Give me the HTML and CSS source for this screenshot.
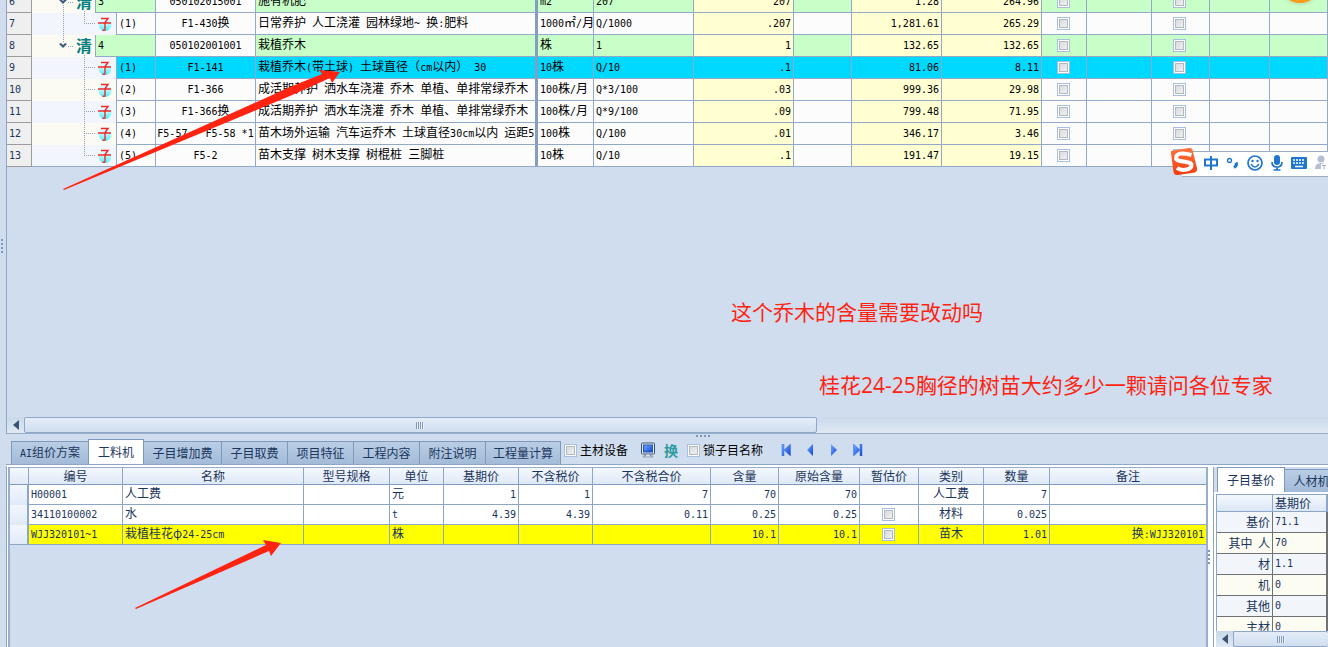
FILE: index.html
```html
<!DOCTYPE html>
<html lang="zh-CN">
<head>
<meta charset="utf-8">
<title>工程计价</title>
<link rel="stylesheet" href="styles.css">
</head>
<body>
<svg class="defs" aria-hidden="true">
  <defs>
    <linearGradient id="ball" x1="0" y1="0" x2="0" y2="1"><stop offset="0" stop-color="#f0fcff"/><stop offset="0.500" stop-color="#b4f7fc"/><stop offset="1" stop-color="#3ff0f8"/></linearGradient>
    <linearGradient id="blue" x1="0" y1="0" x2="1" y2="1"><stop offset="0" stop-color="#79aaff"/><stop offset="1" stop-color="#0a45d8"/></linearGradient>
    <linearGradient id="sogou" x1="0" y1="0" x2="0" y2="1"><stop offset="0" stop-color="#ff7440"/><stop offset="1" stop-color="#f03c0e"/></linearGradient>
    <symbol id="parent" viewBox="0 0 64 22">
      <path d="M27 9l4 4 4-4-2-1-2 2-2-2z" fill="#43587d"/>
      <path d="M36 11.500h6" stroke="#8aa0bd" stroke-dasharray="1 1"/>
      <text x="44" y="17" class="qing">清</text>
    </symbol>
    <symbol id="child" viewBox="0 0 85 22">
      <path d="M54 10.500h10" stroke="#8aa0bd" stroke-dasharray="1 1"/>
      <circle cx="73" cy="11.500" r="6.500" fill="url(#ball)"/>
      <path d="M69 5.500h7l-3 4v7q0 1.500-2.500 .5M66 10h13" fill="none" stroke="#f0282d" stroke-width="1.400"/>
    </symbol>
  </defs>
</svg>

<main class="top">
  <div class="grid-pane">
    <div class="grid-view">
    <table class="grid">
      <colgroup><col class="w25"><col class="w64"><col class="w21"><col class="w39"><col class="w100"><col class="w282"><col class="w56"><col class="w100"><col class="w100"><col class="w58"><col class="w90"><col class="w100"><col class="w45"><col class="w65"><col class="w58"><col class="w60"><col></colgroup>
      <tbody>
      <tr class="item"><th>6</th><td class="tree"><svg width="64" height="22"><use href="#parent"/><path d="M31.500 14v8M52.500 20v2" class="dots"/></svg></td><td colspan="2">3</td><td class="code">050102015001</td><td class="name"><span class="z">施有机肥</span></td><td>m2</td><td>207</td><td class="num">207</td><td></td><td class="num">1.28</td><td class="num">264.96</td><td class="ck"><input type="checkbox" aria-label="6 甲"></td><td></td><td class="ck"><input type="checkbox" aria-label="6 乙"></td><td></td><td></td></tr>
      <tr><th>7</th><td class="tree alt" colspan="2"><svg width="85" height="22"><use href="#child"/><path d="M31.500 0v22M52.500 0v11" class="dots"/></svg></td><td>(1)</td><td class="code">F1-430<span class="z">换</span></td><td class="name"><span class="z">日常养护</span> <span class="z">人工浇灌</span> <span class="z">园林绿地</span>~ <span class="z">换</span>:<span class="z">肥料</span></td><td>1000<span class="z">㎡</span>/<span class="z">月</span></td><td>Q/1000</td><td class="num">.207</td><td></td><td class="num">1,281.61</td><td class="num">265.29</td><td class="ck"><input type="checkbox" aria-label="7 甲"></td><td></td><td class="ck"><input type="checkbox" aria-label="7 乙"></td><td></td><td></td></tr>
      <tr class="item"><th>8</th><td class="tree"><svg width="64" height="22"><use href="#parent"/><path d="M31.500 0v8M52.500 20v2" class="dots"/></svg></td><td colspan="2">4</td><td class="code">050102001001</td><td class="name"><span class="z">栽植乔木</span></td><td><span class="z">株</span></td><td>1</td><td class="num">1</td><td></td><td class="num">132.65</td><td class="num">132.65</td><td class="ck"><input type="checkbox" aria-label="8 甲"></td><td></td><td class="ck"><input type="checkbox" aria-label="8 乙"></td><td></td><td></td></tr>
      <tr class="selected"><th>9</th><td class="tree alt" colspan="2"><svg width="85" height="22"><use href="#child"/><path d="M52.500 0v22" class="dots"/></svg></td><td>(1)</td><td class="code">F1-141</td><td class="name"><span class="z">栽植乔木</span>(<span class="z">带土球</span>) <span class="z">土球直径（</span>cm<span class="z">以内）</span> 30</td><td>10<span class="z">株</span></td><td>Q/10</td><td class="num">.1</td><td></td><td class="num">81.06</td><td class="num">8.11</td><td class="ck"><input type="checkbox" aria-label="9 甲"></td><td></td><td class="ck"><input type="checkbox" aria-label="9 乙"></td><td></td><td></td></tr>
      <tr><th>10</th><td class="tree" colspan="2"><svg width="85" height="22"><use href="#child"/><path d="M52.500 0v22" class="dots"/></svg></td><td>(2)</td><td class="code">F1-366</td><td class="name"><span class="z">成活期养护</span> <span class="z">洒水车浇灌</span> <span class="z">乔木</span> <span class="z">单植、单排常绿乔木</span></td><td>100<span class="z">株</span>/<span class="z">月</span></td><td>Q*3/100</td><td class="num">.03</td><td></td><td class="num">999.36</td><td class="num">29.98</td><td class="ck"><input type="checkbox" aria-label="10 甲"></td><td></td><td class="ck"><input type="checkbox" aria-label="10 乙"></td><td></td><td></td></tr>
      <tr><th>11</th><td class="tree alt" colspan="2"><svg width="85" height="22"><use href="#child"/><path d="M52.500 0v22" class="dots"/></svg></td><td>(3)</td><td class="code">F1-366<span class="z">换</span></td><td class="name"><span class="z">成活期养护</span> <span class="z">洒水车浇灌</span> <span class="z">乔木</span> <span class="z">单植、单排常绿乔木</span></td><td>100<span class="z">株</span>/<span class="z">月</span></td><td>Q*9/100</td><td class="num">.09</td><td></td><td class="num">799.48</td><td class="num">71.95</td><td class="ck"><input type="checkbox" aria-label="11 甲"></td><td></td><td class="ck"><input type="checkbox" aria-label="11 乙"></td><td></td><td></td></tr>
      <tr><th>12</th><td class="tree" colspan="2"><svg width="85" height="22"><use href="#child"/><path d="M52.500 0v22" class="dots"/></svg></td><td>(4)</td><td class="code pre">F5-57   F5-58 *1</td><td class="name"><span class="z">苗木场外运输</span> <span class="z">汽车运乔木</span> <span class="z">土球直径</span>30cm<span class="z">以内</span> <span class="z">运距</span>5</td><td>100<span class="z">株</span></td><td>Q/100</td><td class="num">.01</td><td></td><td class="num">346.17</td><td class="num">3.46</td><td class="ck"><input type="checkbox" aria-label="12 甲"></td><td></td><td class="ck"><input type="checkbox" aria-label="12 乙"></td><td></td><td></td></tr>
      <tr><th>13</th><td class="tree alt last" colspan="2"><svg width="85" height="21"><use href="#child" height="22"/><path d="M52.500 0v11" class="dots"/></svg></td><td>(5)</td><td class="code">F5-2</td><td class="name"><span class="z">苗木支撑</span> <span class="z">树木支撑</span> <span class="z">树棍桩</span> <span class="z">三脚桩</span></td><td>10<span class="z">株</span></td><td>Q/10</td><td class="num">.1</td><td></td><td class="num">191.47</td><td class="num">19.15</td><td class="ck"><input type="checkbox" aria-label="13 甲"></td><td></td><td class="ck"><input type="checkbox" aria-label="13 乙"></td><td></td><td></td></tr>
      </tbody>
    </table>
    </div>
    <div class="hscroll">
      <button type="button" class="arrow" aria-label="向左滚动"><svg width="6" height="10"><path d="M6 0v10L0 5z" fill="#3d5272"/></svg></button>
      <div class="thumb"><span class="grip"></span></div>
    </div>
  </div>
</main>

<section class="bottom">
  <span class="split-h"></span>
  <div class="bar">
    <div class="tabs" role="tablist">
      <button type="button" role="tab" class="tab w78"><span class="m">AI</span>组价方案</button>
      <button type="button" role="tab" class="tab on w56" aria-selected="true">工料机</button>
      <button type="button" role="tab" class="tab w78">子目增加费</button>
      <button type="button" role="tab" class="tab w66">子目取费</button>
      <button type="button" role="tab" class="tab w66">项目特征</button>
      <button type="button" role="tab" class="tab w66">工程内容</button>
      <button type="button" role="tab" class="tab w66">附注说明</button>
      <button type="button" role="tab" class="tab w75">工程量计算</button>
    </div>
    <div class="tools">
      <label><input type="checkbox">主材设备</label>
      <button type="button" class="ib" aria-label="显示"><svg width="16" height="16"><rect x="1.500" y="1" width="13" height="11" rx="1" fill="#e9eef7" stroke="#3a5078"/><rect x="3.500" y="3" width="9" height="7" fill="url(#blue)" stroke="#1d55b0"/><path d="M6 12h4v1.500q3 0 3 1.500H3q0-1.500 3-1.500z" fill="#dce2ea" stroke="#75839a" stroke-width=".7"/></svg></button>
      <button type="button" class="ib swap">换</button>
      <label><input type="checkbox">锁子目名称</label>
      <div class="nav">
        <button type="button" class="ib" aria-label="第一条"><svg width="10" height="12"><path d="M1 0h2v12H1zM9.500 0v12L3 6z" fill="url(#blue)" stroke="#3b6de0" stroke-width=".5"/></svg></button>
        <button type="button" class="ib" aria-label="上一条"><svg width="10" height="12"><path d="M8 0v12L2 6z" fill="url(#blue)"/></svg></button>
        <button type="button" class="ib" aria-label="下一条"><svg width="10" height="12"><path d="M2 0v12l6-6z" fill="url(#blue)"/></svg></button>
        <button type="button" class="ib" aria-label="最后一条"><svg width="10" height="12"><path d="M7 0h2v12H7zM.5 0v12L7 6z" fill="url(#blue)" stroke="#3b6de0" stroke-width=".5"/></svg></button>
      </div>
    </div>
  </div>
  <div class="panels">
    <div class="detail-pane">
      <table class="detail">
        <colgroup><col class="w19"><col class="w94"><col class="w181"><col class="w86"><col class="w54"><col class="w75"><col class="w74"><col class="w118"><col class="w68"><col class="w81"><col class="w59"><col class="w65"><col class="w66"><col></colgroup>
        <thead><tr><th></th><th>编号</th><th>名称</th><th>型号规格</th><th>单位</th><th>基期价</th><th>不含税价</th><th>不含税合价</th><th>含量</th><th>原始含量</th><th>暂估价</th><th>类别</th><th>数量</th><th>备注</th></tr></thead>
        <tbody>
        <tr><th></th><td>H00001</td><td><span class="z">人工费</span></td><td></td><td><span class="z">元</span></td><td class="r">1</td><td class="r">1</td><td class="r">7</td><td class="r">70</td><td class="r">70</td><td></td><td class="c"><span class="z">人工费</span></td><td class="r">7</td><td></td></tr>
        <tr><th></th><td>34110100002</td><td><span class="z">水</span></td><td></td><td>t</td><td class="r">4.39</td><td class="r">4.39</td><td class="r">0.11</td><td class="r">0.25</td><td class="r">0.25</td><td class="ck"><input type="checkbox" aria-label="暂估价 水"></td><td class="c"><span class="z">材料</span></td><td class="r">0.025</td><td></td></tr>
        <tr class="hot"><th></th><td>WJJ320101~1</td><td><span class="z">栽植桂花φ</span>24-25cm</td><td></td><td><span class="z">株</span></td><td></td><td></td><td></td><td class="r">10.1</td><td class="r">10.1</td><td class="ck"><input type="checkbox" aria-label="暂估价 桂花"></td><td class="c"><span class="z">苗木</span></td><td class="r">1.01</td><td class="r"><span class="z">换</span>:WJJ320101</td></tr>
        </tbody>
      </table>
    </div>
    <div class="split-v"><span></span></div>
    <aside class="side">
      <div class="side-tabs" role="tablist">
        <button type="button" role="tab" class="tab on w68" aria-selected="true">子目基价</button>
        <button type="button" role="tab" class="tab w66">人材机费</button>
      </div>
      <div class="side-body">
        <div class="side-view">
        <table class="price">
          <colgroup><col class="w56"><col class="w54"><col></colgroup>
          <thead><tr><th></th><th>基期价</th><th></th></tr></thead>
          <tbody>
          <tr><th>基价</th><td>71.1</td><td></td></tr>
          <tr><th>其中 &nbsp;人</th><td>70</td><td></td></tr>
          <tr><th>材</th><td>1.1</td><td></td></tr>
          <tr><th>机</th><td>0</td><td></td></tr>
          <tr><th>其他</th><td>0</td><td></td></tr>
          <tr><th>主材</th><td>0</td><td></td></tr>
          </tbody>
        </table>
        </div>
        <div class="hscroll">
          <button type="button" class="arrow" aria-label="向左滚动"><svg width="6" height="10"><path d="M6 0v10L0 5z" fill="#3d5272"/></svg></button>
          <div class="thumb wide"><span class="grip"></span></div>
        </div>
      </div>
    </aside>
  </div>
</section>

<span class="dots-left"></span>
<svg class="marks" aria-hidden="true"><g fill="#ff2412"><path d="M63 189L290 87l32-13-3-4 21 2-8 11-2-5-40 18L64 190z"/><path d="M135 608L266 545l-3-5 18 3-10 13-2-5L136 609z"/></g></svg>
<p class="note first">这个乔木的含量需要改动吗</p>
<p class="note second">桂花24-25胸径的树苗大约多少一颗请问各位专家</p>
<span class="orb"></span>

<div class="ime">
  <svg width="158" height="28" aria-hidden="true">
    <path d="M1 5Q0 3 3 2.500L19 0q3-.5 3.500 2L27 20q.5 4-2 4.500L8 27q-4 .5-4.500-3z" fill="url(#sogou)"/>
    <path d="M21.500 7Q7 3 6 9.500C5 15 22 12 21.500 17.500C21 22.500 11 23 7 20" fill="none" stroke="#fff" stroke-width="4"/>
    <g fill="none" stroke="#1f76cf" stroke-width="2">
      <path d="M35 11.500h12v6H35zM41 8v14"/>
      <circle cx="59.500" cy="12.500" r="2" stroke-width="1.300"/>
      <path d="M66 14.500q1.500 3-2 5" stroke-width="3"/>
      <circle cx="85" cy="15" r="7" stroke-width="1.700"/>
      <path d="M81 16q4 6 8 0" stroke-width="1.400"/>
      <path d="M102 14q0 5 5 5t5-5M107 19v3M103.500 22h7" stroke-width="1.700"/>
    </g>
    <rect x="104" y="7" width="6" height="10" rx="3" fill="#1f76cf"/>
    <circle cx="82.500" cy="13" r="1.200" fill="#1f76cf"/><circle cx="87.500" cy="13" r="1.200" fill="#1f76cf"/>
    <rect x="121" y="9" width="16" height="12" rx="1" fill="#1f76cf"/>
    <path d="M123 12h12M123 15h12" stroke="#fff" stroke-width="1.500" stroke-dasharray="2 1"/><path d="M125 18.500h8" stroke="#fff" stroke-width="1.500"/>
    <circle cx="151" cy="11" r="3.500" fill="#b4bfd2"/><path d="M145 21q0-6 6-6t7 6z" fill="#b4bfd2"/><path d="M151 16h7v6h-7z" fill="#fff"/><path d="M152 17.500h4M154 17.500v4" stroke="#a3b0c8"/>
  </svg>
</div>
</body>
</html>
```

FILE: styles.css
```css
* { box-sizing: border-box; }
html, body { height: 100%; }
body {
  margin: 0;
  display: flex;
  flex-direction: column;
  position: relative;
  overflow: hidden;
  background: #d0ddee;
  color: #1b355c;
  font: 12px/16px "Noto Sans CJK SC", sans-serif;
}
button { font: inherit; color: inherit; border: 0; padding: 0; background: none; }
table { border-collapse: separate; border-spacing: 0; table-layout: fixed; width: 100%; }
th { font-weight: 400; }
td, th { padding: 0 2px; white-space: nowrap; overflow: hidden; }
td, .m { font-family: "DejaVu Sans Mono", "Noto Sans CJK SC", monospace; font-size: 10px; }
.z { font: 12px/12px "Noto Sans CJK SC", sans-serif; }
.defs { position: absolute; width: 0; height: 0; }
.qing { font: 700 16px "Noto Sans CJK SC", sans-serif; fill: #047f7f; }
.dots { fill: none; stroke: #8aa0bd; stroke-dasharray: 1 1; }

.w19 { width: 19px; } .w21 { width: 21px; } .w25 { width: 25px; } .w39 { width: 39px; }
.w45 { width: 45px; } .w54 { width: 54px; } .w56 { width: 56px; } .w58 { width: 58px; }
.w59 { width: 59px; } .w60 { width: 60px; } .w64 { width: 64px; } .w65 { width: 65px; }
.w66 { width: 66px; } .w68 { width: 68px; } .w74 { width: 74px; } .w75 { width: 75px; }
.w78 { width: 78px; } .w81 { width: 81px; } .w86 { width: 86px; } .w90 { width: 90px; }
.w94 { width: 94px; } .w100 { width: 100px; } .w118 { width: 118px; } .w181 { width: 181px; }
.w282 { width: 282px; }

input[type="checkbox"] {
  appearance: none;
  flex: none;
  width: 13px;
  height: 13px;
  margin: 0;
  border: 1px solid #a8bfe0;
  background: linear-gradient(135deg, #d6d9de, #f1f2f3) content-box, #fff;
  padding: 1px;
  outline: 1px solid #b4b8bf;
  outline-offset: -3px;
}
.ck { text-align: center; padding: 0 2px 0 0; }
.ck input { display: block; margin: 0 auto; }

/* upper grid */
.top { flex: 1; min-height: 0; display: flex; padding-left: 6px; }
.grid-pane { flex: 1; min-width: 0; display: flex; flex-direction: column; border-left: 1px solid #8ea6c6; border-bottom: 1px solid #9aaec9; }
.grid-view { flex: 1; min-height: 0; overflow: hidden; }
.grid { margin-top: -9px; color: #000; }
.grid td, .grid th { height: 22px; line-height: 21px; border-right: 1px solid #93a9c8; border-bottom: 1px solid #93a9c8; }
.grid td { background: #fcfcfd; }
.grid th { background: #efefef; border-color: #9c9c9c; text-align: left; color: #1b355c; font: 10px/21px "DejaVu Sans Mono", monospace; }
.grid .item td { background: #c8ffc8; }
.grid .item .code { background: #fcfcfd; }
.grid .num, .grid .item .num { background: #ffffd2; text-align: right; }
.grid .selected td { background: #00d9ff; }
.grid .code { text-align: center; padding: 0; }
.grid .pre { white-space: pre; }
.grid .name { border-right: 3px solid #859dbf; }
.grid .tree, .grid .item .tree, .grid .selected .tree { padding: 0; border-bottom: 0; background: #fbfbf4; line-height: 0; }
.grid .tree svg { display: block; }
.grid .tree.alt, .grid .selected .tree.alt { background: #f2f6fc; }
.grid .tree.last { border-bottom: 1px solid #93a9c8; }

.hscroll { flex: none; display: flex; height: 16px; background: linear-gradient(#c9d8ea, #e0e9f3); }
.arrow { width: 17px; display: flex; align-items: center; justify-content: center; }
.thumb { width: 60%; display: flex; align-items: center; justify-content: center; border: 1px solid #8fa8ca; border-radius: 2px; background: linear-gradient(#e4edf7, #d0deef); }
.thumb.wide { width: auto; flex: 1; border-right: 0; }
.grip { width: 8px; height: 7px; background: repeating-linear-gradient(90deg, #7f98bd 0 1px, #eaf1f9 1px 2px); }

/* lower section */
.bottom { flex: none; height: 213px; display: flex; flex-direction: column; position: relative; padding-left: 6px; }
.split-h { position: absolute; left: 696px; top: 1px; width: 14px; height: 2px; background: repeating-linear-gradient(90deg, #7f98bd 0 2px, transparent 2px 4px); }
.bar { flex: none; display: flex; height: 31px; border-bottom: 1px solid #8ea6c6; }
.tabs { display: flex; align-items: flex-end; padding-left: 5px; }
.tab { height: 23px; border: solid #7f99bd; border-width: 1px 1px 0 0; background: linear-gradient(#b9cde5, #a3bbd8); white-space: nowrap; text-align: center; }
.tab:first-child { border-left-width: 1px; }
.tab.on { height: 25px; background: #fff; border-left-width: 1px; margin-left: -1px; }
.tools { display: flex; align-items: center; padding: 2px 0 0 3px; color: #000; }
.tools label { display: flex; align-items: center; gap: 3px; }
.ib { display: flex; align-items: center; justify-content: center; margin-left: 12px; }
.swap { margin: 0 9px 0 8px; width: 14px; font-size: 14px; font-weight: 700; color: #2a9a9f; }
.nav { display: flex; padding-left: 4px; }
.nav .ib { margin: 0 0 0 14px; }
.panels { flex: 1; min-height: 0; display: flex; border-top: 2px solid #fff; border-left: 1px solid #8ea6c6; }
.detail-pane { flex: 1; min-width: 0; border: solid #9aaecb; border-width: 1px 2px 0 2px; margin-left: 1px; box-shadow: -1px 0 #fff; }
.detail thead th { height: 17px; line-height: 16px; background: linear-gradient(#f4f8fd, #dfe9f7); border-right: 1px solid #8ea6c6; border-bottom: 1px solid #7f9bc1; }
.detail tbody th { background: linear-gradient(#f2f7fd, #dfeaf8); border-right: 2px solid #8ea6c6; }
.detail td { height: 20px; line-height: 19px; background: #fff; border-right: 1px solid #8ea6c6; border-bottom: 1px solid #8ea6c6; }
.detail tbody tr:last-child th { border-bottom: 1px solid #8ea6c6; }
.detail .hot td { background: #ff0; }
.detail .r { text-align: right; }
.detail .c { text-align: center; }
.detail tr > :last-child { border-right: 0; }
.split-v { width: 5px; background: #fff; display: flex; align-items: center; }
.split-v span { width: 2px; height: 14px; background: repeating-linear-gradient(#7f98bd 0 2px, transparent 2px 4px); }
.side { flex: none; width: 115px; display: flex; flex-direction: column; overflow: hidden; border-left: 1px solid #8ea6c6; }
.side-tabs { flex: none; display: flex; align-items: flex-end; padding-left: 4px; height: 25px; }
.side-tabs .tab { flex: none; }
.side-body { flex: 1; min-height: 0; display: flex; flex-direction: column; border-top: 2px solid #fff; border-left: 2px solid #fff; }
.side-view { flex: 1; min-height: 0; overflow: hidden; border: solid #8ea6c6; border-width: 1px 0 0 1px; }
.price td, .price th { height: 21px; line-height: 20px; border-right: 1px solid #6e7175; border-bottom: 1px solid #6e7175; }
.price thead th { height: 17px; line-height: 16px; background: linear-gradient(#f4f8fd, #dbe7f6); border-color: #8ea6c6; text-align: left; }
.price tbody th { text-align: right; }
.price tbody tr > * { background: #f2f6fb; }
.price tbody tr:nth-child(even) > * { background: #fcfcf3; }

/* overlays */
.dots-left { position: absolute; left: 1px; top: 239px; width: 2px; height: 14px; background: repeating-linear-gradient(#7f98bd 0 2px, transparent 2px 4px); }
.marks { position: absolute; left: 0; top: 0; width: 100%; height: 100%; pointer-events: none; }
.note { position: absolute; margin: 0; color: #ff2412; font: 21px/28px "Open Sans", "Noto Sans CJK SC", sans-serif; white-space: nowrap; }
.first { left: 731px; top: 298px; }
.second { left: 819px; top: 371px; }
.orb { position: absolute; left: 1279px; top: -39px; width: 42px; height: 42px; border-radius: 50%; background: #ff9c1a; box-shadow: 0 1px 4px #b9d9a9; }
.ime { position: absolute; left: 1170px; top: 148px; width: 158px; height: 28px; }
.ime::before { content: ""; position: absolute; left: 12px; right: 0; top: 3px; height: 24px; border: solid #9fabbb; border-width: 1px 0; background: #fff; }
.ime svg { position: relative; display: block; }
```
